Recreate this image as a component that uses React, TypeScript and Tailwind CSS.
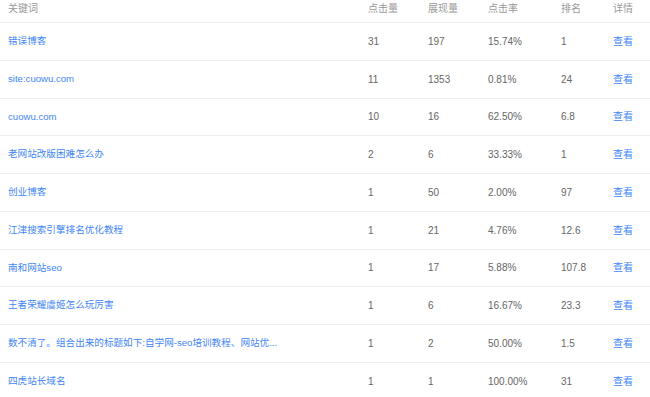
const rows = [
  ["错误博客", "31", "197", "15.74%", "1"],
  ["site:cuowu.com", "11", "1353", "0.81%", "24"],
  ["cuowu.com", "10", "16", "62.50%", "6.8"],
  ["老网站改版困难怎么办", "2", "6", "33.33%", "1"],
  ["创业博客", "1", "50", "2.00%", "97"],
  ["江津搜索引擎排名优化教程", "1", "21", "4.76%", "12.6"],
  ["南和网站seo", "1", "17", "5.88%", "107.8"],
  ["王者荣耀虞姬怎么玩厉害", "1", "6", "16.67%", "23.3"],
  ["数不清了。组合出来的标题如下:自学网-seo培训教程、网站优...", "1", "2", "50.00%", "1.5"],
  ["四虎站长域名", "1", "1", "100.00%", "31"],
];

const cols = "grid grid-cols-[360px_60px_60px_73px_52px_1fr] items-center pl-2";

export default function App() {
  return (
    <div
      className="w-[650px] h-[397px] overflow-hidden bg-white text-[10px]"
      style={{ fontFamily: '"Liberation Sans", "Noto Sans CJK SC", sans-serif' }}
    >
      <div className={`${cols} h-[22px] items-start pt-px leading-4 text-[#999]`}>
        <span>关键词</span>
        <span>点击量</span>
        <span>展现量</span>
        <span>点击率</span>
        <span>排名</span>
        <span>详情</span>
      </div>
      {rows.map((r, i) => (
        <div key={i} className={`${cols} h-[37.75px] border-t border-[#eeeeee] text-[#666]`}>
          <a className="text-[#3f86f5] text-[9.6px] truncate">{r[0]}</a>
          <span>{r[1]}</span>
          <span>{r[2]}</span>
          <span>{r[3]}</span>
          <span>{r[4]}</span>
          <a className="text-[#3f86f5]">查看</a>
        </div>
      ))}
    </div>
  );
}
